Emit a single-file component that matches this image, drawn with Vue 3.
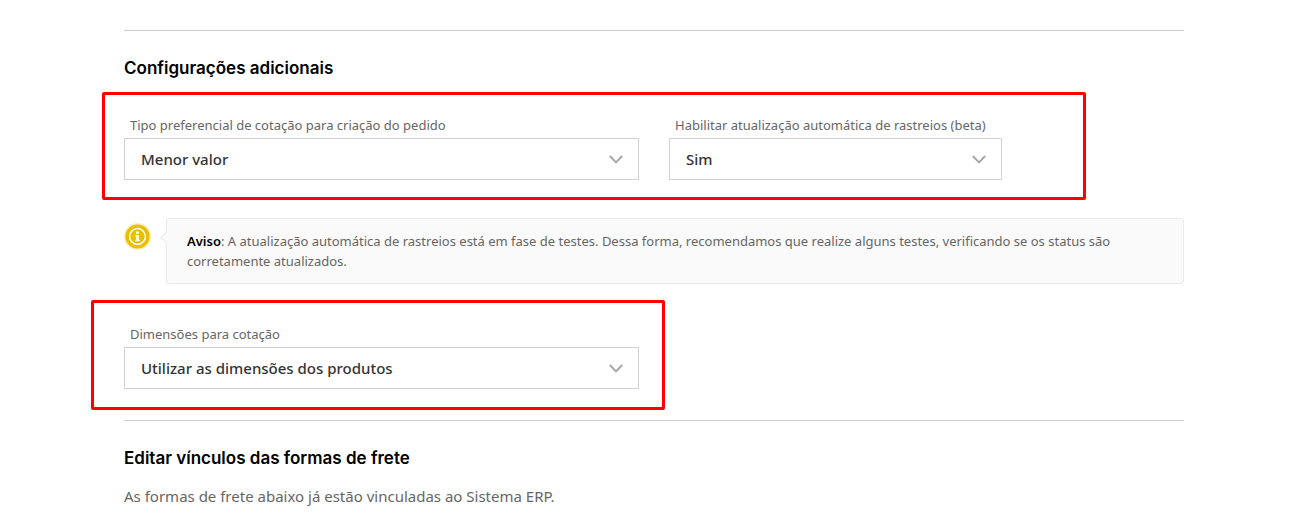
<template>
  <main class="settings">
    <section class="settings-section">
      <h2>Configurações adicionais</h2>

      <div class="row highlight highlight-wide">
        <div class="field col-6">
          <label for="quote-type">Tipo preferencial de cotação para criação do pedido</label>
          <div class="select-wrap">
            <select id="quote-type" v-model="quoteType">
              <option v-for="o in quoteTypes" :key="o">{{ o }}</option>
            </select>
            <svg class="chevron" viewBox="0 0 14 9" aria-hidden="true">
              <path d="M0.8 1l6.2 6.4L13.2 1" />
            </svg>
          </div>
        </div>
        <div class="field col-4">
          <label for="tracking">Habilitar atualização automática de rastreios (beta)</label>
          <div class="select-wrap">
            <select id="tracking" v-model="tracking">
              <option v-for="o in trackingOptions" :key="o">{{ o }}</option>
            </select>
            <svg class="chevron" viewBox="0 0 14 9" aria-hidden="true">
              <path d="M0.8 1l6.2 6.4L13.2 1" />
            </svg>
          </div>
        </div>
      </div>

      <div class="notice">
        <svg class="notice-icon" viewBox="0 0 28 28" aria-hidden="true">
          <circle cx="14" cy="14" r="14" fill="#faedb4" />
          <circle cx="14" cy="14" r="12.5" fill="#e8c000" />
          <circle cx="14" cy="14" r="8.2" fill="none" stroke="#fff" stroke-width="1.5" />
          <circle cx="14" cy="10.1" r="1.5" fill="#fff" />
          <path d="M11.7 12.4h3.6v4.9h1.1v1.5h-4.8v-1.5h1.1v-3.4h-1z" fill="#fff" />
        </svg>
        <p class="notice-text">
          <strong>Aviso</strong>: A atualização automática de rastreios está em fase de testes. Dessa forma, recomendamos que realize alguns testes, verificando se os status são corretamente atualizados.
        </p>
      </div>

      <div class="row highlight highlight-narrow">
        <div class="field col-6">
          <label for="dimensions">Dimensões para cotação</label>
          <div class="select-wrap">
            <select id="dimensions" v-model="dimensions">
              <option v-for="o in dimensionOptions" :key="o">{{ o }}</option>
            </select>
            <svg class="chevron" viewBox="0 0 14 9" aria-hidden="true">
              <path d="M0.8 1l6.2 6.4L13.2 1" />
            </svg>
          </div>
        </div>
      </div>
    </section>

    <section class="settings-section">
      <h2>Editar vínculos das formas de frete</h2>
      <p class="description">As formas de frete abaixo já estão vinculadas ao Sistema ERP.</p>
    </section>
  </main>
</template>

<script setup>
import { ref } from 'vue'

const quoteTypes = ['Menor valor']
const trackingOptions = ['Sim']
const dimensionOptions = ['Utilizar as dimensões dos produtos']

const quoteType = ref(quoteTypes[0])
const tracking = ref(trackingOptions[0])
const dimensions = ref(dimensionOptions[0])
</script>

<style>
body {
  background: #fff;
}
</style>

<style scoped>
.settings {
  padding: 30px 120px 0 124px;
  font-family: "Noto Sans", sans-serif;
  font-size: 13px;
  line-height: 20px;
  color: #666;
}

.settings-section {
  border-top: 1px solid #ccc;
  padding-top: 24px;
}

.settings-section + .settings-section {
  margin-top: 31px;
}

h2 {
  margin: 0;
  font-family: Inter, sans-serif;
  font-size: 17px;
  font-weight: 600;
  line-height: 26px;
  color: #000;
}

.row {
  display: grid;
  grid-template-columns: repeat(12, 1fr);
  column-gap: 30px;
  margin-top: 34px;
}

.col-6 {
  grid-column: span 6;
}

.col-4 {
  grid-column: span 4;
}

.field label {
  display: block;
  padding-left: 6px;
  margin-bottom: 3px;
}

.select-wrap {
  position: relative;
}

select {
  display: block;
  appearance: none;
  box-sizing: border-box;
  width: 100%;
  height: 42px;
  padding: 0 44px 0 16px;
  border: 1px solid #d2d2d2;
  border-radius: 0;
  background: #fff;
  font-family: inherit;
  font-size: 15px;
  font-weight: 500;
  color: #333;
}

.chevron {
  position: absolute;
  top: 17px;
  right: 16px;
  width: 14px;
  height: 9px;
  fill: none;
  stroke: #a8a8a8;
  stroke-width: 2;
  pointer-events: none;
}

/* red frame drawn around the row */
.highlight {
  position: relative;
}

.highlight::after {
  content: '';
  position: absolute;
  border: 3px solid #fe0000;
  border-radius: 2px;
  pointer-events: none;
}

.highlight-wide::after {
  inset: -23px 98px -20px -22px;
}

.highlight-narrow::after {
  inset: -24px 519px -21px -33px;
}

.notice {
  display: flex;
  align-items: flex-start;
  gap: 15px;
  margin-top: 38px;
}

.notice-icon {
  flex: none;
  width: 27px;
  height: 27px;
  margin-top: 5px;
}

.notice-text {
  position: relative;
  flex: 1;
  margin: 0;
  padding: 12px 20px;
  border: 1px solid #e9e9e9;
  border-radius: 3px;
  background: #fafafa;
}

.notice-text::before {
  content: '';
  position: absolute;
  top: 14px;
  left: -5px;
  width: 8px;
  height: 8px;
  border: solid #e9e9e9;
  border-width: 0 0 1px 1px;
  background: #fafafa;
  transform: rotate(45deg);
}

.notice strong {
  font-weight: 600;
  color: #000;
}

.notice + .row {
  margin-top: 40px;
}

.description {
  margin: 13px 0 0;
  font-size: 15px;
  line-height: 24px;
}
</style>
